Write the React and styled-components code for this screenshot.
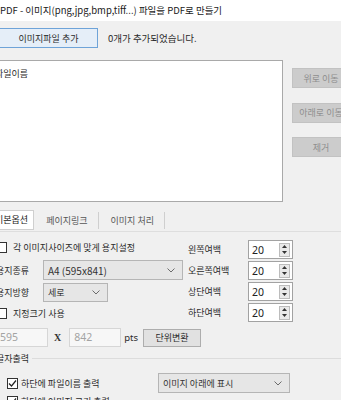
import styled, { createGlobalStyle } from 'styled-components';

const GlobalStyle = createGlobalStyle`
  body {
    margin: 0;
    background: #f0f0f0;
    font-family: 'Noto Sans CJK KR', 'Noto Sans', sans-serif;
    font-size: 9px;
    color: #2a2a2a;
  }
`;

// the capture cuts the dialog's left edge, so the window is pulled 10px left
const Window = styled.div`
  width: 360px;
  height: 400px;
  margin-left: -10px;
  overflow: hidden;
  background: #f0f0f0;
`;

const TitleBar = styled.div`
  height: 21px;
  line-height: 20px;
  padding-left: 10px;
  background: #fff;
  font-size: 9.5px;
  color: #1a1a1a;
  white-space: nowrap;
`;

const TopRow = styled.div`
  display: flex;
  align-items: center;
  gap: 10px;
  margin-top: 7px;
  padding-left: 9px;
  font-size: 9.5px;
`;

const Button = styled.button`
  box-sizing: border-box;
  width: ${(p) => p.$w}px;
  height: ${(p) => p.$h || 20}px;
  padding: 0;
  font-family: inherit;
  font-size: 9px;
  color: ${(p) => (p.$disabled ? '#8e8e8e' : '#2a2a2a')};
  background: ${(p) => (p.$primary ? '#e5eef8' : p.$disabled ? '#cccccc' : '#e1e1e1')};
  border: 1px solid ${(p) => (p.$primary ? '#6ea3d8' : p.$disabled ? '#c2c2c2' : '#adadad')};
  white-space: nowrap;
  overflow: hidden;
`;

const ListRow = styled.div`
  display: flex;
  align-items: flex-start;
  gap: 9px;
  margin-top: 12px;
  padding-left: 1px;
`;

const ListBox = styled.div`
  box-sizing: border-box;
  width: 296px;
  height: 142px;
  padding: 6px 0 0 3px;
  background: #fff;
  border: 1px solid #a9a9a9;
`;

const SideButtons = styled.div`
  display: flex;
  flex-direction: column;
  gap: 14.5px;
  margin-top: 8px;
`;

const TabBar = styled.div`
  display: flex;
  align-items: flex-end;
  height: 21px;
  margin-top: 8px;
  padding-left: 2px;
  border-bottom: 1px solid #dedede;
`;

const Tab = styled.div`
  box-sizing: border-box;
  height: ${(p) => (p.$active ? 20 : 17)}px;
  line-height: ${(p) => (p.$active ? 18 : 17)}px;
  margin-bottom: ${(p) => (p.$active ? 1 : 2)}px;
  padding: ${(p) => (p.$active ? '0 5px 0 2px' : '0 10px 0 12px')};
  background: ${(p) => (p.$active ? '#fff' : 'transparent')};
  border: ${(p) => (p.$active ? '1px solid #cfcfcf' : 'none')};
  border-right: 1px solid #cfcfcf;
  color: ${(p) => (p.$active ? '#222' : '#555')};
  white-space: nowrap;
`;

const Options = styled.div`
  display: flex;
  margin-top: 8px;
`;

const LeftCol = styled.div`
  box-sizing: border-box;
  width: 198px;
  padding-left: 6px;
  display: flex;
  flex-direction: column;
`;

const CheckRow = styled.label`
  display: flex;
  align-items: center;
  gap: ${(p) => p.$gap || 6}px;
  height: 14px;
  margin-top: ${(p) => p.$mt || 0}px;
  white-space: nowrap;
`;

const Box = styled.span`
  box-sizing: border-box;
  width: 11px;
  height: 11px;
  flex: none;
  display: flex;
  align-items: center;
  justify-content: center;
  background: #fff;
  border: 1px solid #333;
`;

const FieldRow = styled.div`
  display: flex;
  align-items: center;
  margin-top: ${(p) => p.$mt || 0}px;
`;

const Label = styled.span`
  width: ${(p) => p.$w}px;
  flex: none;
  white-space: nowrap;
`;

const Select = styled.div`
  box-sizing: border-box;
  display: flex;
  align-items: center;
  justify-content: space-between;
  width: ${(p) => p.$w}px;
  height: ${(p) => p.$h || 20}px;
  padding: 0 7px 0 4px;
  background: #e6e6e6;
  border: 1px solid #b5b5b5;
  font-size: ${(p) => p.$fs || 9}px;
  white-space: nowrap;
  color: #333;
`;

const RightCol = styled.div`
  display: flex;
  flex-direction: column;
  gap: 2px;
`;

const SpinRow = styled.div`
  display: flex;
  align-items: center;
  height: 19px;
`;

const SpinBox = styled.div`
  box-sizing: border-box;
  width: 45px;
  height: 19px;
  display: flex;
  align-items: center;
  justify-content: space-between;
  padding: 0 2px 0 3px;
  background: #fff;
  border: 1px solid #a2a2a2;
  font-size: 10.5px;
  font-family: 'Noto Sans', sans-serif;
  color: #222;
`;

const SpinButtons = styled.div`
  box-sizing: border-box;
  width: 11px;
  height: 14px;
  display: flex;
  flex-direction: column;
  align-items: center;
  justify-content: space-around;
  background: #e9e9e9;
  border: 1px solid #bcbcbc;
`;

const SizeRow = styled.div`
  display: flex;
  align-items: center;
  margin-top: 6px;
  padding-left: 5px;
`;

const NumInput = styled.div`
  box-sizing: border-box;
  width: ${(p) => p.$w}px;
  height: 19px;
  padding-left: 4px;
  line-height: 17px;
  background: #f7f7f7;
  border: 1px solid #d6d6d6;
  color: #a3a3a3;
  font-family: 'Noto Sans', sans-serif;
  font-size: 10.5px;
`;

const Times = styled.span`
  margin: 0 8px 0 6px;
  font-family: 'Liberation Serif', serif;
  font-size: 10px;
  font-weight: bold;
  color: #333;
`;

const Unit = styled.span`
  margin: 0 5px 0 3px;
  font-family: 'Noto Sans', sans-serif;
  font-size: 9.5px;
`;

const GroupHeader = styled.div`
  display: flex;
  align-items: center;
  gap: 3px;
  height: 12px;
  margin-top: 5px;
  padding-left: 6px;
  &::after {
    content: '';
    flex: 1;
    border-top: 1px solid #dcdcdc;
  }
`;

const GroupBody = styled.div`
  display: flex;
  margin-top: 9px;
`;

const GroupChecks = styled.div`
  box-sizing: border-box;
  width: 168px;
  padding: 3px 0 0 17px;
  display: flex;
  flex-direction: column;
  gap: 4px;
`;

const Chevron = () => (
  <svg width="8" height="5" viewBox="0 0 8 5">
    <polyline points="0.5,0.5 4,4 7.5,0.5" fill="none" stroke="#6b6b6b" strokeWidth="1" />
  </svg>
);

const Check = ({ on }) => (
  <Box>
    {on && (
      <svg width="9" height="9" viewBox="0 0 9 9">
        <polyline points="1,4.5 3.5,7 8,1.5" fill="none" stroke="#222" strokeWidth="1.2" />
      </svg>
    )}
  </Box>
);

const Spin = ({ value }) => (
  <SpinBox>
    {value}
    <SpinButtons>
      <svg width="5" height="3" viewBox="0 0 5 3"><polygon points="0,3 2.5,0 5,3" fill="#333" /></svg>
      <svg width="5" height="3" viewBox="0 0 5 3"><polygon points="0,0 2.5,3 5,0" fill="#333" /></svg>
    </SpinButtons>
  </SpinBox>
);

const margins = ['왼쪽여백', '오른쪽여백', '상단여백', '하단여백'];

export default function App() {
  return (
    <>
      <GlobalStyle />
      <Window>
        <TitleBar>PDF - 이미지(png,jpg,bmp,tiff...) 파일을 PDF로 만들기</TitleBar>

        <TopRow>
          <Button $primary $w={99}>이미지파일 추가</Button>
          <span>0개가 추가되었습니다.</span>
        </TopRow>

        <ListRow>
          <ListBox>파일이름</ListBox>
          <SideButtons>
            <Button $disabled $w={58}>위로 이동</Button>
            <Button $disabled $w={58}>아래로 이동</Button>
            <Button $disabled $w={58}>제거</Button>
          </SideButtons>
        </ListRow>

        <TabBar>
          <Tab $active>기본옵션</Tab>
          <Tab>페이지링크</Tab>
          <Tab>이미지 처리</Tab>
        </TabBar>

        <Options>
          <LeftCol>
            <CheckRow>
              <Check />
              각 이미지사이즈에 맞게 용지설정
            </CheckRow>
            <FieldRow $mt={6}>
              <Label $w={47}>용지종류</Label>
              <Select $w={140} $fs={10}>
                A4 (595x841)
                <Chevron />
              </Select>
            </FieldRow>
            <FieldRow $mt={3}>
              <Label $w={47}>용지방향</Label>
              <Select $w={65} $h={19}>
                세로
                <Chevron />
              </Select>
            </FieldRow>
            <CheckRow $mt={4}>
              <Check />
              지정크기 사용
            </CheckRow>
          </LeftCol>
          <RightCol>
            {margins.map((m) => (
              <SpinRow key={m}>
                <Label $w={60}>{m}</Label>
                <Spin value="20" />
              </SpinRow>
            ))}
          </RightCol>
        </Options>

        <SizeRow>
          <NumInput $w={53}>595</NumInput>
          <Times>X</Times>
          <NumInput $w={52}>842</NumInput>
          <Unit>pts</Unit>
          <Button $w={58} $h={18}>단위변환</Button>
        </SizeRow>

        <GroupHeader>글자출력</GroupHeader>
        <GroupBody>
          <GroupChecks>
            <CheckRow $gap={3}>
              <Check on />
              하단에 파일이름 출력
            </CheckRow>
            <CheckRow $gap={3}>
              <Check on />
              하단에 이미지 크기 출력
            </CheckRow>
          </GroupChecks>
          <Select $w={132}>
            이미지 아래에 표시
            <Chevron />
          </Select>
        </GroupBody>
      </Window>
    </>
  );
}
